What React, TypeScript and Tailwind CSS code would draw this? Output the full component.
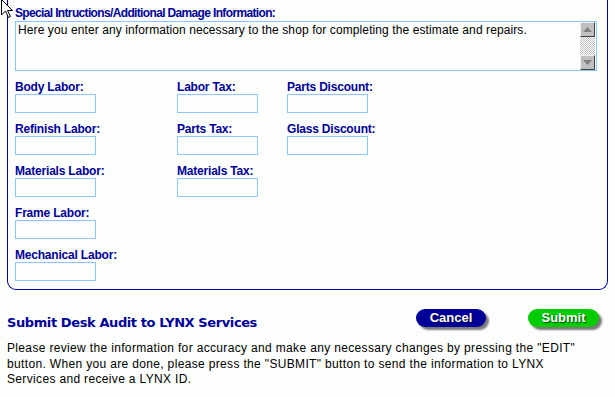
import React from 'react';

const navy = 'text-[#000099]';

function Field({ label }: { label: string }) {
  return (
    <div className="flex flex-col">
      <div className={`h-[14px] text-[12px] leading-[14px] font-bold ${navy} tracking-[-0.2px] whitespace-nowrap`}>{label}</div>
      <input type="text" className="w-[81px] h-[19px] border border-[#8cc8ff] bg-[#fcfefc] outline-none" />
    </div>
  );
}

function ScrollButton({ up }: { up?: boolean }) {
  return (
    <div className="w-[15px] h-[15px] bg-[#c0c0c0] border-t border-l border-t-[#eeeeee] border-l-[#eeeeee] border-b border-r border-b-[#404040] border-r-[#404040] flex items-center justify-center">
      <svg width="9" height="5" viewBox="0 0 9 5">
        {up ? <polygon points="4.5,0 9,5 0,5" fill="#808080" /> : <polygon points="0,0 9,0 4.5,5" fill="#808080" />}
      </svg>
    </div>
  );
}

export default function App() {
  return (
    <div className="relative w-[615px] h-[397px] overflow-hidden bg-[#fcfefc] font-['Liberation_Sans',Arial,sans-serif]">
      {/* mouse cursor left in the capture */}
      <svg className="absolute left-[1px] top-[-1px]" width="13" height="20" viewBox="0 0 13 20">
        <polygon points="0.5,0.5 0.5,16 4.5,12 7.5,18.5 9.5,17.5 6.5,11.5 11.5,11.5" fill="#ffffff" stroke="#000000" strokeWidth="1" />
      </svg>

      <div className="ml-[7px] w-[601px] border-x border-b border-[#000099] rounded-b-[9px] pl-[7px] pt-[6px] pb-[8px]">
        <div className={`h-[15px] text-[12px] leading-[14px] font-bold ${navy} tracking-[-0.65px] whitespace-nowrap`}>
          Special Intructions/Additional Damage Information:
        </div>
        <div className="w-[582px] h-[50px] border border-[#8cc8ff] flex">
          <div className="flex-1 pl-[2px] pt-[1px] text-[12px] leading-[15px] text-black tracking-[0.1px]">
            Here you enter any information necessary to the shop for completing the estimate and repairs.
          </div>
          <div className="w-[15px] mr-[1px] flex flex-col">
            <ScrollButton up />
            <div className="flex-1 bg-[repeating-conic-gradient(#c0c0c0_0_25%,#ffffff_0_50%)] bg-[length:2px_2px]" />
            <ScrollButton />
          </div>
        </div>

        <div className="mt-[9px] grid grid-cols-[162px_110px_81px] gap-y-[9px]">
          <Field label="Body Labor:" />
          <Field label="Labor Tax:" />
          <Field label="Parts Discount:" />
          <Field label="Refinish Labor:" />
          <Field label="Parts Tax:" />
          <Field label="Glass Discount:" />
          <Field label="Materials Labor:" />
          <Field label="Materials Tax:" />
          <div />
          <Field label="Frame Labor:" />
          <div />
          <div />
          <Field label="Mechanical Labor:" />
        </div>
      </div>

      <div className="mt-[19px] ml-[7px] flex items-start">
        <div className={`mt-[6px] text-[13px] leading-[15px] font-bold ${navy} font-['DejaVu_Sans',Verdana,sans-serif] tracking-[-0.4px]`}>
          Submit Desk Audit to LYNX Services
        </div>
        <button className="ml-auto w-[70px] h-[18px] rounded-full bg-[#000099] text-white text-[13px] font-bold leading-[18px] shadow-[3px_3px_2px_#7a7a7a] [text-shadow:1px_1px_1px_#000033]">
          Cancel
        </button>
        <button className="ml-[42px] mr-[16px] w-[71px] h-[18px] rounded-full bg-[#00cc00] text-white text-[13px] font-bold leading-[18px] shadow-[3px_3px_2px_#7a7a7a] [text-shadow:1px_1px_1px_#004400]">
          Submit
        </button>
      </div>

      <p className="mt-[11px] ml-[7px] text-[12px] leading-[15.5px] text-black tracking-[0.34px] whitespace-nowrap">
        Please review the information for accuracy and make any necessary changes by pressing the "EDIT"
        <br />
        button. When you are done, please press the "SUBMIT" button to send the information to LYNX
        <br />
        Services and receive a LYNX ID.
      </p>
    </div>
  );
}
